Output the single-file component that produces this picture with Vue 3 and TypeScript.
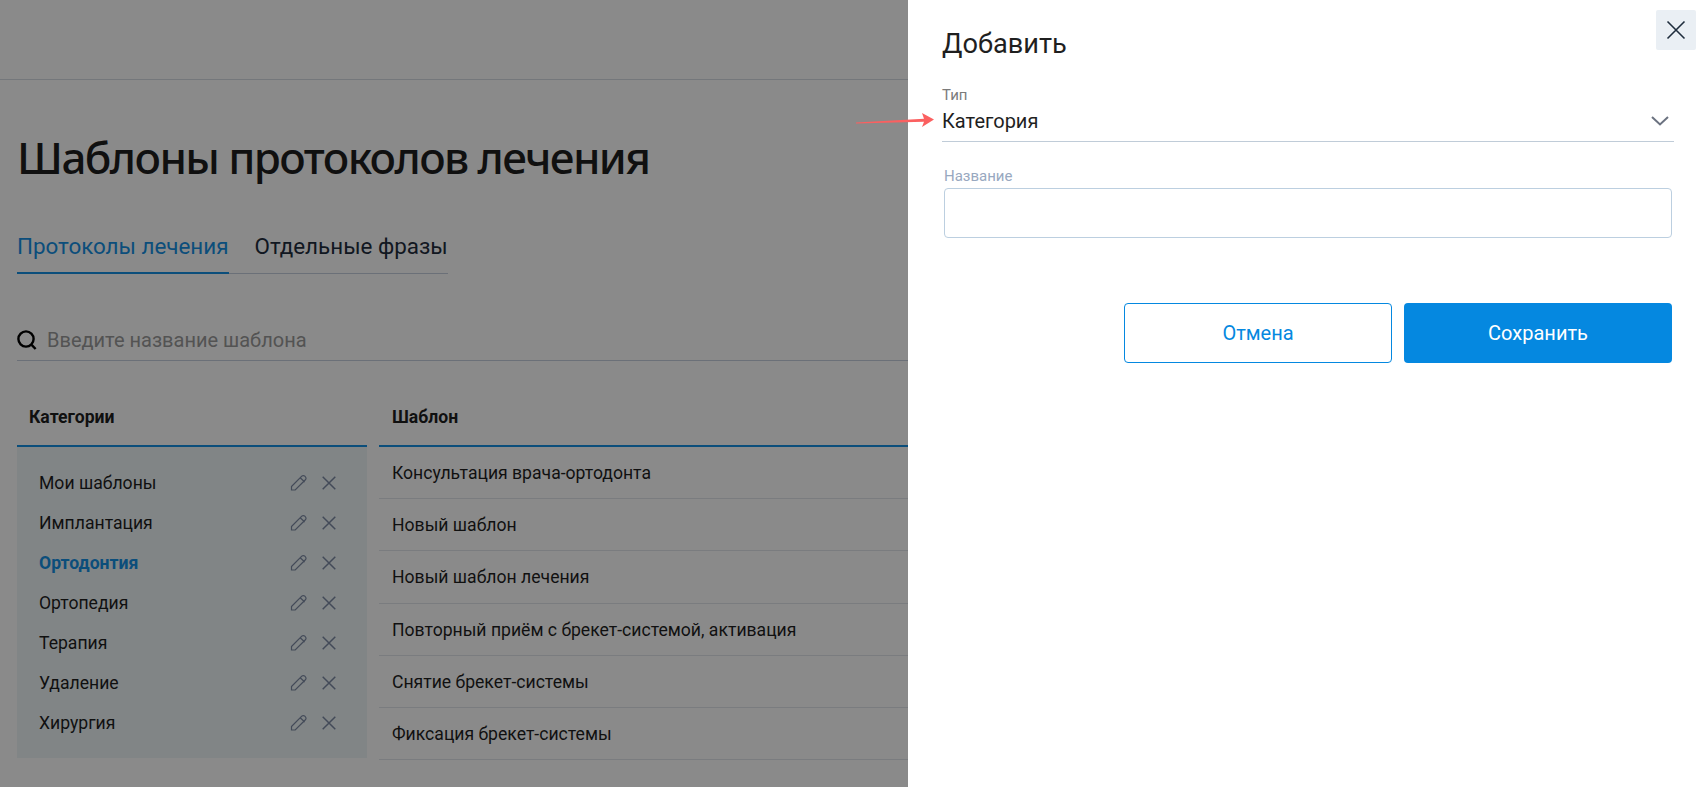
<template>
  <div class="page">
    <div class="topbar"></div>

    <main class="content">
      <h1>Шаблоны протоколов лечения</h1>

      <div class="tabs">
        <div v-for="(tab, i) in tabs" :key="tab" class="tab" :class="{ active: i === 0 }">{{ tab }}</div>
      </div>

      <div class="search">
        <svg class="search-icon" width="20" height="20" viewBox="0 0 20 20" fill="none">
          <circle cx="9" cy="9" r="7.6" stroke="#000" stroke-width="2.4" />
          <path d="M14.6 14.8 18.6 19" stroke="#000" stroke-width="2.4" />
        </svg>
        <input type="text" placeholder="Введите название шаблона" />
      </div>

      <div class="columns">
        <section>
          <div class="col-head first">Категории</div>
          <ul class="categories">
            <li v-for="cat in categories" :key="cat" :class="{ current: cat === 'Ортодонтия' }">
              <span class="cat-name">{{ cat }}</span>
              <svg class="pencil" width="18" height="18" viewBox="0 0 18 18" fill="none">
                <path d="M1.5 12.5 11.8 2.2a2.1 2.1 0 0 1 3 0l.6.6a2.1 2.1 0 0 1 0 3L5.2 16H1.5Z M10.2 3.8l4.5 4.2" stroke="#7d8aa3" stroke-width="1.2" />
              </svg>
              <svg class="remove" width="14" height="14" viewBox="0 0 14 14" fill="none">
                <path d="M.7.7l12.6 12.6M13.3.7.7 13.3" stroke="#7d8aa3" stroke-width="1.5" />
              </svg>
            </li>
          </ul>
        </section>

        <section>
          <div class="col-head">Шаблон</div>
          <ul class="templates">
            <li v-for="item in templates" :key="item">{{ item }}</li>
          </ul>
        </section>
      </div>
    </main>

    <div class="overlay"></div>

    <aside class="drawer">
      <button class="close" type="button" aria-label="Закрыть">
        <svg width="20" height="20" viewBox="0 0 20 20" fill="none">
          <path d="M1.5 1.5l17 17M18.500 1.500l-17 17" stroke="#1f2d3d" stroke-width="1.6" />
        </svg>
      </button>

      <h2>Добавить</h2>

      <div class="select">
        <div class="select-label">Тип</div>
        <div class="select-value">
          <span>Категория</span>
          <svg width="18" height="10" viewBox="0 0 18 10" fill="none">
            <path d="M1 1l8 7.500 8-7.500" stroke="#6b7280" stroke-width="2" />
          </svg>
        </div>
      </div>

      <label class="field">
        <span>Название</span>
        <input type="text" />
      </label>

      <div class="actions">
        <button class="btn btn-outline" type="button">Отмена</button>
        <button class="btn btn-primary" type="button">Сохранить</button>
      </div>
    </aside>

    <svg class="arrow" width="80" height="16" viewBox="0 0 80 16">
      <path d="M0 9.500 68 5.800 66 0 78 6.500 66 14 68 8.800 0 10.500Z" fill="#fb6060" />
    </svg>
  </div>
</template>

<script setup lang="ts">
const tabs: string[] = ['Протоколы лечения', 'Отдельные фразы'];

const categories: string[] = [
  'Мои шаблоны',
  'Имплантация',
  'Ортодонтия',
  'Ортопедия',
  'Терапия',
  'Удаление',
  'Хирургия',
];

const templates: string[] = [
  'Консультация врача-ортодонта',
  'Новый шаблон',
  'Новый шаблон лечения',
  'Повторный приём с брекет-системой, активация',
  'Снятие брекет-системы',
  'Фиксация брекет-системы',
];
</script>

<style>
html,
body {
  height: 100%;
  overflow: hidden;
}
</style>

<style scoped>
.page {
  position: relative;
  height: 787px;
  overflow: hidden;
  background: #fff;
  color: #1f1f1f;
  font-family: Roboto, "Liberation Sans", sans-serif;
}

.topbar {
  height: 79px;
  border-bottom: 1px solid #d6dce4;
}

.content {
  padding: 47px 0 0 17px;
}

h1 {
  margin: 0;
  height: 60px;
  font-family: "Noto Sans", sans-serif;
  font-size: 44px;
  font-weight: 500;
  line-height: 60px;
  letter-spacing: -1.6px;
}

.tabs {
  display: inline-flex;
  gap: 26px;
  margin-top: 41px;
  border-bottom: 1px solid #c6d0de;
}

.tab {
  padding-bottom: 8px;
  font-size: 22.4px;
  line-height: 36px;
  color: #1f2d3d;
}

.tab.active {
  margin-bottom: -1px;
  border-bottom: 2px solid #1690e4;
  color: #1690e4;
}

.search {
  display: flex;
  align-items: center;
  gap: 10px;
  height: 40px;
  margin-top: 46px;
  border-bottom: 1px solid #c6d0de;
}

.search input {
  flex: 1;
  border: 0;
  outline: 0;
  padding: 0;
  background: none;
  font-family: inherit;
  font-size: 20px;
}

.search input::placeholder {
  color: #9a9a9a;
}

.columns {
  display: grid;
  grid-template-columns: 350px 1fr;
  gap: 12px;
  margin-top: 28px;
}

.col-head {
  height: 56px;
  padding-left: 13px;
  border-bottom: 2px solid #1690e4;
  font-size: 17.6px;
  font-weight: 700;
  line-height: 56px;
}

.col-head.first {
  padding-left: 12px;
}

ul {
  margin: 0;
  padding: 0;
  list-style: none;
}

.categories {
  height: 311px;
  padding: 16px 31px 14px 22px;
  box-sizing: border-box;
  background: #eef6f8;
}

.categories li {
  display: flex;
  align-items: center;
  height: 40px;
  font-size: 17.6px;
}

.cat-name {
  flex: 1;
}

.categories li.current {
  color: #1690e4;
  font-weight: 700;
}

.pencil {
  margin-right: 14px;
}

.remove {
  margin-top: -1px;
}

.templates li {
  height: 52.2px;
  box-sizing: border-box;
  padding: 1px 0 0 13px;
  border-bottom: 1px solid #e2e6ea;
  font-size: 17.6px;
  line-height: 51px;
}

.overlay {
  position: absolute;
  inset: 0;
  background: rgba(0, 0, 0, 0.46);
}

.drawer {
  position: absolute;
  top: 0;
  right: 0;
  bottom: 0;
  width: 797px;
  padding: 24px 31px 0 34px;
  box-sizing: border-box;
  background: #fff;
}

.close {
  position: absolute;
  top: 10px;
  right: 9px;
  display: flex;
  align-items: center;
  justify-content: center;
  width: 40px;
  height: 40px;
  padding: 0;
  border: 0;
  border-radius: 2px;
  background: #eaeff4;
}

h2 {
  margin: 0;
  font-size: 27.2px;
  font-weight: 400;
  line-height: 40px;
  color: #1f1f1f;
}

.select {
  margin-top: 22px;
  border-bottom: 1px solid #c0ccd8;
}

.select-label {
  font-size: 15px;
  line-height: 18px;
  color: #7b7b7b;
}

.select-value {
  display: flex;
  align-items: center;
  justify-content: space-between;
  height: 37px;
  padding: 0 5px 4px 0;
  box-sizing: border-box;
  font-size: 20px;
}

.field {
  display: block;
  margin: 25px 2px 0;
}

.field span {
  display: block;
  margin-bottom: 3px;
  font-size: 15px;
  line-height: 18px;
  color: #98a8c0;
}

.field input {
  display: block;
  width: 100%;
  height: 50px;
  box-sizing: border-box;
  border: 1px solid #bccfe0;
  border-radius: 4px;
  outline: 0;
}

.actions {
  display: flex;
  justify-content: flex-end;
  gap: 12px;
  margin-top: 65px;
  padding-right: 2px;
}

.btn {
  width: 268px;
  height: 60px;
  border-radius: 4px;
  font-family: inherit;
  font-size: 20px;
}

.btn-outline {
  border: 1px solid #0588e0;
  background: #fff;
  color: #0588e0;
}

.btn-primary {
  border: 0;
  background: #0588e0;
  color: #fff;
}

.arrow {
  position: absolute;
  top: 113px;
  left: 856px;
}
</style>
